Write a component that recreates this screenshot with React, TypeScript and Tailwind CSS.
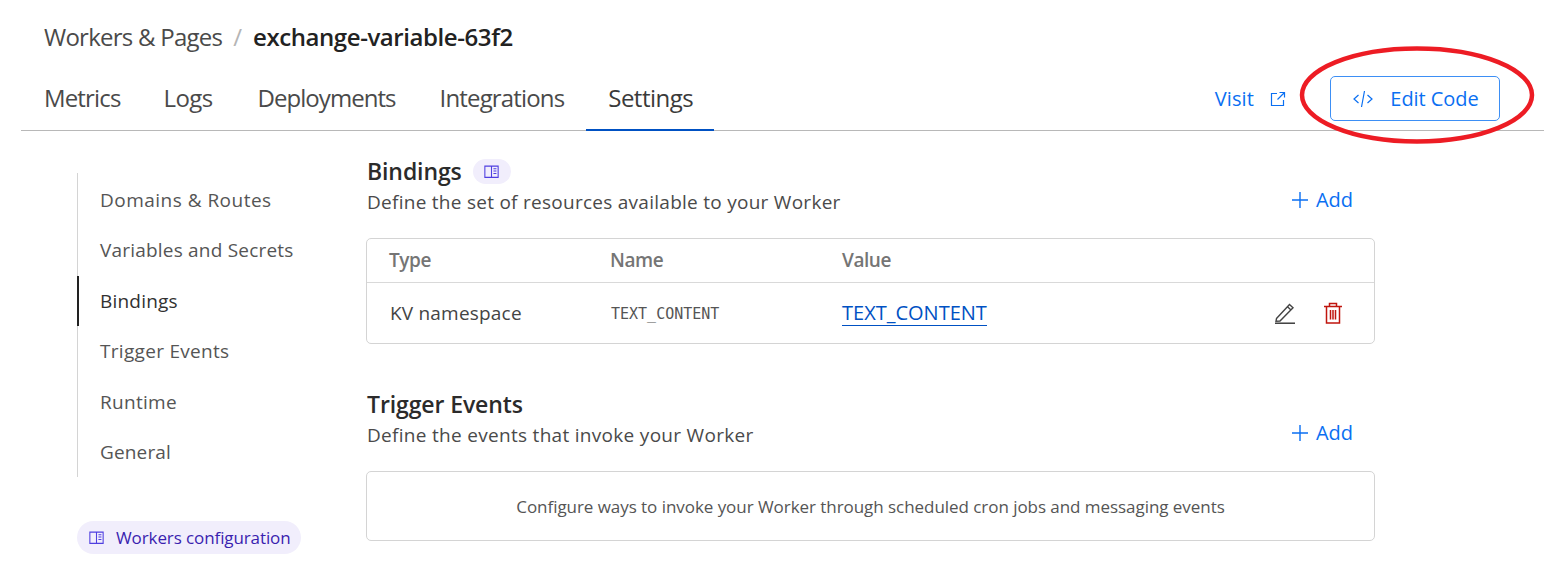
import React from "react";

function Book({ className }: { className?: string }) {
  return (
    <svg viewBox="0 0 14 14" fill="none" stroke="currentColor" strokeWidth="1" className={className}>
      <path d="M7 2H.8v10.5H7m0-10.5h6.2v10.5H7m0-10.5v10.5" />
      <path d="M8.8 4.4h2.8M8.8 6.6h2.8M8.8 8.8h2.8" />
    </svg>
  );
}

function AddBtn() {
  return (
    <span className="flex items-center gap-[7px] text-[#0a6ff2] text-[20px] leading-none mb-[5px]">
      <svg viewBox="0 0 18 18" className="w-[18px] h-[18px]" stroke="currentColor" strokeWidth="1.4" fill="none">
        <path d="M9 1v16M1 9h16" />
      </svg>
      <span>Add</span>
    </span>
  );
}

const tabs = [
  { label: "Metrics", cls: "pl-[23px] pr-[21px] tracking-[-0.85px] text-[#4a4a4a]" },
  { label: "Logs", cls: "pl-[22px] pr-[23px] tracking-[-0.6px] text-[#4a4a4a]" },
  { label: "Deployments", cls: "pl-[22px] pr-[22px] tracking-[-0.95px] text-[#4a4a4a]" },
  { label: "Integrations", cls: "pl-[22px] pr-[22px] tracking-[-0.85px] text-[#4a4a4a]" },
  { label: "Settings", cls: "pl-[22px] pr-[21px] tracking-[-0.5px] border-b-2 -mb-px border-[#0051c3] text-[#3a3a3a]" },
];

const side = [
  { label: "Domains & Routes", cls: "pl-[22px] tracking-[0.48px] text-[#555]" },
  { label: "Variables and Secrets", cls: "pl-[22px] tracking-[0.2px] text-[#555]" },
  { label: "Bindings", cls: "border-l-2 -ml-px pl-[21px] border-[#222] text-[#313131] tracking-[0.2px]" },
  { label: "Trigger Events", cls: "pl-[22px] tracking-[0.3px] text-[#555]" },
  { label: "Runtime", cls: "pl-[22px] tracking-[0.3px] text-[#555]" },
  { label: "General", cls: "pl-[22px] tracking-[0.15px] text-[#555]" },
];

export default function App() {
  return (
    <div className="relative w-[1544px] h-[571px] overflow-hidden bg-white font-['Open_Sans','Noto_Sans',sans-serif] text-[#313131]">
      <header className="pl-[21px] h-[131px] flex flex-col">
        <div className="pl-[23px] pt-[20px] h-[76px] flex items-start gap-[11px] text-[24px] leading-[34px]">
          <span className="text-[#4a4a4a] tracking-[-0.75px]">Workers &amp; Pages</span>
          <span className="text-[#b5b5b5]">/</span>
          <span className="font-semibold text-[#222] tracking-[-0.42px]">exchange-variable-63f2</span>
        </div>
        <div className="flex-1 flex items-stretch border-b border-[#b8b8b8] pr-[44px]">
          <nav className="flex">
            {tabs.map((t) => (
              <div key={t.label} className={`flex items-start pt-[5px] text-[24px] leading-[34px] ${t.cls}`}>
                {t.label}
              </div>
            ))}
          </nav>
          <div className="ml-auto flex items-start">
            <a className="flex items-center gap-[16px] h-[45px] text-[#0a6ff2] text-[20px] tracking-[0.1px]">
              Visit
              <svg viewBox="0 0 16 16" className="w-[16px] h-[16px]" fill="none" stroke="currentColor" strokeWidth="1.2">
                <path d="M7 2.5H1.5v12h12V9M9.5 1.5h5v5M14.5 1.5L7.5 8.5" />
              </svg>
            </a>
            <button className="ml-[44px] w-[170px] h-[45px] border border-[#3d8ff5] rounded-[5px] pl-[2px] flex items-center justify-center gap-[17px] text-[#0a6ff2] text-[20px] tracking-[-0.05px]">
              <svg viewBox="0 0 20 18" className="w-[20px] h-[18px]" fill="none" stroke="currentColor" strokeWidth="1.2">
                <path d="M5.5 5L1 9l4.5 4M14.5 5L19 9l-4.5 4M11.5 1L8.5 17" />
              </svg>
              Edit Code
            </button>
          </div>
        </div>
      </header>

      <div className="flex pl-[77px] pt-[42px]">
        <aside className="w-[289px] shrink-0">
          <ul className="w-[224px] border-l border-[#d4d4d4] flex flex-col pt-[2px]">
            {side.map((s) => (
              <li key={s.label} className={`h-[50.4px] flex items-center text-[19px] leading-none ${s.cls}`}>
                <span className={s.label === "Bindings" || s.label === "Runtime" ? "translate-y-[1px]" : ""}>{s.label}</span>
              </li>
            ))}
          </ul>
          <div className="mt-[44px] w-[224px] h-[33px] rounded-full bg-[#f1eefc] flex items-center gap-[12px] pl-[12px] text-[17px] tracking-[-0.1px] text-[#3a1fb0]">
            <Book className="w-[15px] h-[15px] text-[#4f3fe0]" />
            Workers configuration
          </div>
        </aside>

        <main className="w-[1009px] -mt-[16px]">
          <section>
            <div className="flex items-center gap-[11px] h-[28px]">
              <h2 className="pl-[1px] text-[23px] font-semibold tracking-[-0.1px] leading-none text-[#2b2b2b]">Bindings</h2>
              <span className="w-[38px] h-[25px] rounded-full bg-[#f1eefc] flex items-center justify-center text-[#4f3fe0]">
                <Book className="w-[15px] h-[15px]" />
              </span>
            </div>
            <div className="flex items-center justify-between pl-[1px] pr-[22px] h-[32px] mt-[1px]">
              <p className="text-[19px] tracking-[0.27px] text-[#4a4a4a]">Define the set of resources available to your Worker</p>
              <AddBtn />
            </div>
            <div className="mt-[20px] border border-[#d4d4d4] rounded-[5px] h-[106px] flex flex-col">
              <div className="h-[44px] border-b border-[#d9d9d9] flex items-center pl-[22px] text-[19px] font-semibold tracking-[-0.45px] text-[#757575]">
                <span className="w-[221px]">Type</span>
                <span className="w-[232px]">Name</span>
                <span>Value</span>
              </div>
              <div className="flex-1 flex items-center pl-[23px] pr-[31px]">
                <span className="w-[221px] text-[19px] tracking-[0.2px] text-[#444]">KV namespace</span>
                <span className="w-[231px] font-['DejaVu_Sans_Mono','Liberation_Mono',monospace] text-[15px] font-light text-[#555] translate-y-[1px]">TEXT_CONTENT</span>
                <span className="text-[20px] leading-[24px] tracking-[0px] text-[#0051c3] border-b border-[#0051c3]">TEXT_CONTENT</span>
                <svg viewBox="0 0 22 22" className="ml-auto w-[22px] h-[22px] text-[#444]" fill="none" stroke="currentColor" strokeWidth="1.4">
                  <path d="M2.5 16.5L15.5 2.5l3.5 3.2L6 19l-4 .3.5-2.8zM13.5 4.8l3.5 3.2" />
                  <path d="M1 21.3h20" strokeWidth="1.7" />
                </svg>
                <svg viewBox="0 0 20 22" className="ml-[27px] w-[20px] h-[22px] text-[#c0150e]" fill="none" stroke="currentColor" strokeWidth="1.5">
                  <path d="M1 4.5h18M6.5 4.5V1.5h7v3M3.5 4.5V21h13V4.5M7.5 8v9.5M10 8v9.5M12.5 8v9.5" />
                </svg>
              </div>
            </div>
          </section>

          <section className="mt-[46px]">
            <h2 className="pl-[1px] text-[23px] font-semibold tracking-[-0.1px] leading-[28px] text-[#2b2b2b]">Trigger Events</h2>
            <div className="flex items-center justify-between pl-[1px] pr-[22px] h-[32px] mt-[1px]">
              <p className="text-[19px] tracking-[0.3px] text-[#4a4a4a]">Define the events that invoke your Worker</p>
              <AddBtn />
            </div>
            <div className="mt-[20px] border border-[#d4d4d4] rounded-[5px] h-[70px] pt-[2px] flex items-center justify-center text-[17px] tracking-[-0.05px] text-[#555]">
              Configure ways to invoke your Worker through scheduled cron jobs and messaging events
            </div>
          </section>
        </main>
      </div>

      <svg viewBox="0 0 240 102" className="absolute left-[1297px] top-[44px] w-[240px] h-[102px] pointer-events-none" fill="none" stroke="#ed1c24" strokeWidth="4.5">
        <ellipse cx="120" cy="51" rx="115" ry="46.5" />
      </svg>
    </div>
  );
}
